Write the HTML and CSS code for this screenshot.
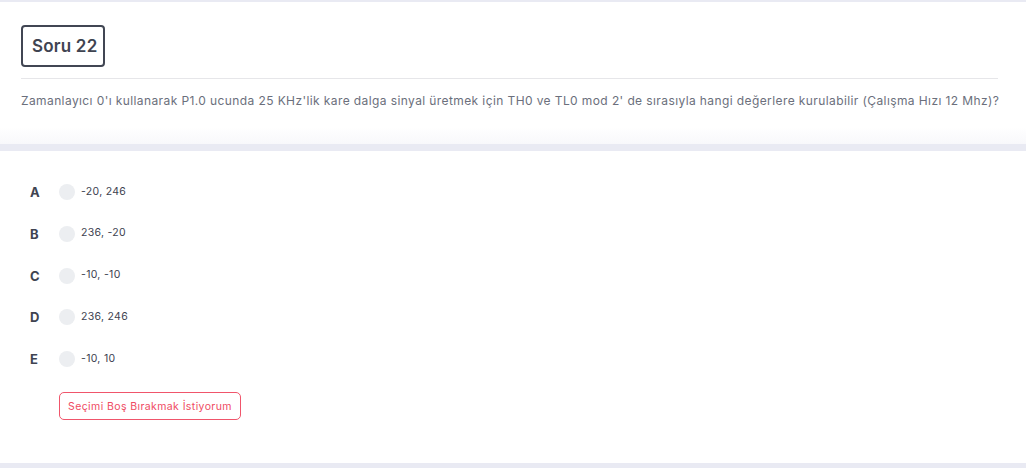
FILE: index.html
```html
<!DOCTYPE html>
<html lang="tr">
<head>
<meta charset="utf-8">
<link rel="stylesheet" href="styles.css">
</head>
<body>
<div class="page">
  <section class="card question">
    <div class="badge">Soru 22</div>
    <hr class="divider">
    <p class="qtext">Zamanlayıcı 0'ı kullanarak P1.0 ucunda 25 KHz'lik kare dalga sinyal üretmek için TH0 ve TL0 mod 2' de sırasıyla hangi değerlere kurulabilir (Çalışma Hızı 12 Mhz)?</p>
  </section>
  <section class="card answers">
    <ul class="options">
      <li class="option"><span class="letter">A</span><span class="radio"></span><span class="otext">-20, 246</span></li>
      <li class="option"><span class="letter">B</span><span class="radio"></span><span class="otext">236, -20</span></li>
      <li class="option"><span class="letter">C</span><span class="radio"></span><span class="otext">-10, -10</span></li>
      <li class="option"><span class="letter">D</span><span class="radio"></span><span class="otext">236, 246</span></li>
      <li class="option"><span class="letter">E</span><span class="radio"></span><span class="otext">-10, 10</span></li>
    </ul>
    <button class="skip">Seçimi Boş Bırakmak İstiyorum</button>
  </section>
</div>
</body>
</html>
```

FILE: styles.css
```css
* { box-sizing: border-box; }
html, body { margin: 0; padding: 0; }
body {
  background: #e9eaf3;
  font-family: "Inter", "Open Sans", sans-serif;
  color: #3f4451;
}
.page {
  padding: 2px 0 0;
  display: flex;
  flex-direction: column;
  gap: 7px;
}
.card {
  background: #fff;
}
.question {
  padding: 23px 28px 0 21px;
  height: 142px;
  background: linear-gradient(to bottom, #fff 0, #fff 125px, #f8f8fb 142px);
}
.badge {
  display: inline-block;
  border: 2px solid #414653;
  border-radius: 4px;
  height: 42px;
  width: 84px;
  padding: 0 0 0 9px;
  line-height: 38px;
  font-size: 17px;
  font-weight: 600;
  letter-spacing: 0.2px;
  color: #3f4451;
}
.divider {
  margin: 11px 0 0;
  border: 0;
  border-top: 1px solid #e6e6e9;
}
.qtext {
  margin: 14px 0 0;
  font-size: 12px;
  line-height: 16px;
  color: #6b6f7c;
  letter-spacing: 0.4px;
  white-space: nowrap;
}
.answers {
  height: 312px;
  padding: 33px 0 0 30px;
}
.options {
  list-style: none;
  margin: 0;
  padding: 0;
  display: flex;
  flex-direction: column;
  gap: 25.8px;
}
.option {
  display: flex;
  align-items: center;
  height: 16px;
}
.letter {
  width: 29px;
  font-size: 13px;
  font-weight: 700;
  color: #3f4451;
}
.radio {
  width: 16px;
  height: 16px;
  border-radius: 50%;
  background: #eceef1;
  margin-right: 6px;
}
.otext {
  font-size: 10.5px;
  color: #3d4250;
  letter-spacing: 0.3px;
  position: relative;
  top: -1px;
}
.skip {
  margin: 25px 0 0 29px;
  height: 28px;
  width: 182px;
  border: 1px solid #f0556b;
  border-radius: 5px;
  background: #fff;
  color: #ef4b63;
  font-family: inherit;
  font-size: 10.5px;
  letter-spacing: 0.4px;
  padding: 0;
  cursor: pointer;
}
```
